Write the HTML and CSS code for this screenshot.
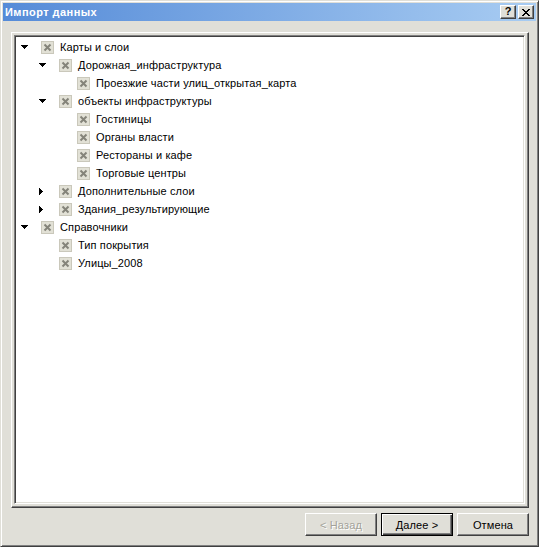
FILE: index.html
```html
<!DOCTYPE html>
<html lang="ru">
<head>
<meta charset="utf-8">
<title>Импорт данных</title>
<link rel="stylesheet" href="styles.css">
</head>
<body>
<div class="window">
  <div class="caption">
    <span class="title">Импорт данных</span>
    <div class="cap-buttons">
      <div class="cap-btn"><span class="q">?</span></div>
      <div class="cap-btn">
        <svg width="8" height="7" viewBox="0 0 8 7" shape-rendering="crispEdges"><path d="M0 0h2v1h1v1h2v-1h1v-1h2v1h-1v1h-1v1h-1v1h1v1h1v1h1v1h-2v-1h-1v-1h-2v1h-1v1h-2v-1h1v-1h1v-1h1v-1h-1v-1h-1v-1h-1z" fill="#000"/></svg>
      </div>
    </div>
  </div>
  <div class="body">
    <div class="panel">
      <div class="tree">
        <div class="row l0"><span class="exp"><svg width="7" height="4" viewBox="0 0 7 4" shape-rendering="crispEdges"><path d="M0 0h7v1h-1v1h-1v1h-1v1h-1v-1h-1v-1h-1v-1h-1z" fill="#000"/></svg></span><span class="cb"><svg width="13" height="13" viewBox="0 0 13 13"><rect x="0.5" y="0.5" width="12" height="12" fill="#e2e1d6" stroke="#cac8bb"/><path d="M3.5 3.5l6 6M9.5 3.5l-6 6" stroke="#85847a" stroke-width="2"/></svg></span><span class="label">Карты и слои</span></div>
        <div class="row l1"><span class="exp"><svg width="7" height="4" viewBox="0 0 7 4" shape-rendering="crispEdges"><path d="M0 0h7v1h-1v1h-1v1h-1v1h-1v-1h-1v-1h-1v-1h-1z" fill="#000"/></svg></span><span class="cb"><svg width="13" height="13" viewBox="0 0 13 13"><rect x="0.5" y="0.5" width="12" height="12" fill="#e2e1d6" stroke="#cac8bb"/><path d="M3.5 3.5l6 6M9.5 3.5l-6 6" stroke="#85847a" stroke-width="2"/></svg></span><span class="label">Дорожная_инфраструктура</span></div>
        <div class="row l2"><span class="exp"></span><span class="cb"><svg width="13" height="13" viewBox="0 0 13 13"><rect x="0.5" y="0.5" width="12" height="12" fill="#e2e1d6" stroke="#cac8bb"/><path d="M3.5 3.5l6 6M9.5 3.5l-6 6" stroke="#85847a" stroke-width="2"/></svg></span><span class="label">Проезжие части улиц_открытая_карта</span></div>
        <div class="row l1"><span class="exp"><svg width="7" height="4" viewBox="0 0 7 4" shape-rendering="crispEdges"><path d="M0 0h7v1h-1v1h-1v1h-1v1h-1v-1h-1v-1h-1v-1h-1z" fill="#000"/></svg></span><span class="cb"><svg width="13" height="13" viewBox="0 0 13 13"><rect x="0.5" y="0.5" width="12" height="12" fill="#e2e1d6" stroke="#cac8bb"/><path d="M3.5 3.5l6 6M9.5 3.5l-6 6" stroke="#85847a" stroke-width="2"/></svg></span><span class="label">объекты инфраструктуры</span></div>
        <div class="row l2"><span class="exp"></span><span class="cb"><svg width="13" height="13" viewBox="0 0 13 13"><rect x="0.5" y="0.5" width="12" height="12" fill="#e2e1d6" stroke="#cac8bb"/><path d="M3.5 3.5l6 6M9.5 3.5l-6 6" stroke="#85847a" stroke-width="2"/></svg></span><span class="label">Гостиницы</span></div>
        <div class="row l2"><span class="exp"></span><span class="cb"><svg width="13" height="13" viewBox="0 0 13 13"><rect x="0.5" y="0.5" width="12" height="12" fill="#e2e1d6" stroke="#cac8bb"/><path d="M3.5 3.5l6 6M9.5 3.5l-6 6" stroke="#85847a" stroke-width="2"/></svg></span><span class="label">Органы власти</span></div>
        <div class="row l2"><span class="exp"></span><span class="cb"><svg width="13" height="13" viewBox="0 0 13 13"><rect x="0.5" y="0.5" width="12" height="12" fill="#e2e1d6" stroke="#cac8bb"/><path d="M3.5 3.5l6 6M9.5 3.5l-6 6" stroke="#85847a" stroke-width="2"/></svg></span><span class="label">Рестораны и кафе</span></div>
        <div class="row l2"><span class="exp"></span><span class="cb"><svg width="13" height="13" viewBox="0 0 13 13"><rect x="0.5" y="0.5" width="12" height="12" fill="#e2e1d6" stroke="#cac8bb"/><path d="M3.5 3.5l6 6M9.5 3.5l-6 6" stroke="#85847a" stroke-width="2"/></svg></span><span class="label">Торговые центры</span></div>
        <div class="row l1"><span class="exp"><svg width="4" height="7" viewBox="0 0 4 7" shape-rendering="crispEdges"><path d="M0 0h1v1h1v1h1v1h1v1h-1v1h-1v1h-1v1h-1z" fill="#000"/></svg></span><span class="cb"><svg width="13" height="13" viewBox="0 0 13 13"><rect x="0.5" y="0.5" width="12" height="12" fill="#e2e1d6" stroke="#cac8bb"/><path d="M3.5 3.5l6 6M9.5 3.5l-6 6" stroke="#85847a" stroke-width="2"/></svg></span><span class="label">Дополнительные слои</span></div>
        <div class="row l1"><span class="exp"><svg width="4" height="7" viewBox="0 0 4 7" shape-rendering="crispEdges"><path d="M0 0h1v1h1v1h1v1h1v1h-1v1h-1v1h-1v1h-1z" fill="#000"/></svg></span><span class="cb"><svg width="13" height="13" viewBox="0 0 13 13"><rect x="0.5" y="0.5" width="12" height="12" fill="#e2e1d6" stroke="#cac8bb"/><path d="M3.5 3.5l6 6M9.5 3.5l-6 6" stroke="#85847a" stroke-width="2"/></svg></span><span class="label">Здания_результирующие</span></div>
        <div class="row l0"><span class="exp"><svg width="7" height="4" viewBox="0 0 7 4" shape-rendering="crispEdges"><path d="M0 0h7v1h-1v1h-1v1h-1v1h-1v-1h-1v-1h-1v-1h-1z" fill="#000"/></svg></span><span class="cb"><svg width="13" height="13" viewBox="0 0 13 13"><rect x="0.5" y="0.5" width="12" height="12" fill="#e2e1d6" stroke="#cac8bb"/><path d="M3.5 3.5l6 6M9.5 3.5l-6 6" stroke="#85847a" stroke-width="2"/></svg></span><span class="label">Справочники</span></div>
        <div class="row l1"><span class="exp"></span><span class="cb"><svg width="13" height="13" viewBox="0 0 13 13"><rect x="0.5" y="0.5" width="12" height="12" fill="#e2e1d6" stroke="#cac8bb"/><path d="M3.5 3.5l6 6M9.5 3.5l-6 6" stroke="#85847a" stroke-width="2"/></svg></span><span class="label">Тип покрытия</span></div>
        <div class="row l1"><span class="exp"></span><span class="cb"><svg width="13" height="13" viewBox="0 0 13 13"><rect x="0.5" y="0.5" width="12" height="12" fill="#e2e1d6" stroke="#cac8bb"/><path d="M3.5 3.5l6 6M9.5 3.5l-6 6" stroke="#85847a" stroke-width="2"/></svg></span><span class="label">Улицы_2008</span></div>
      </div>
    </div>
    <div class="buttons">
      <div class="btn disabled">&lt; Назад</div>
      <div class="btn default">Далее &gt;</div>
      <div class="btn">Отмена</div>
    </div>
  </div>
</div>
</body>
</html>
```
FILE: styles.css
```css
html, body {
  margin: 0;
  padding: 0;
}
body {
  width: 539px;
  height: 547px;
  font-family: "Liberation Sans", Arial, sans-serif;
  font-size: 11px;
  color: #000;
}
.window {
  box-sizing: border-box;
  width: 539px;
  height: 547px;
  background: #e0dfd8;
  border: 1px solid;
  border-color: #e0dfd8 #404040 #404040 #e0dfd8;
  box-shadow: inset 1px 1px #fff, inset -1px -1px #808080;
  padding: 2px;
  display: flex;
  flex-direction: column;
}
.caption {
  height: 18px;
  flex: none;
  background: linear-gradient(90deg, #558bd8, #a8ccf2);
  display: flex;
  align-items: center;
  justify-content: space-between;
  padding: 0 2px 0 2px;
}
.title {
  color: #fff;
  font-weight: bold;
  font-size: 11px;
  letter-spacing: 0.45px;
}
.cap-buttons {
  display: flex;
  gap: 2px;
}
.cap-btn {
  box-sizing: border-box;
  width: 16px;
  height: 14px;
  background: #e0dfd8;
  border: 1px solid;
  border-color: #fff #404040 #404040 #fff;
  box-shadow: inset -1px -1px #808080;
  display: flex;
  align-items: center;
  justify-content: center;
}
.q {
  font-weight: bold;
  font-size: 11px;
  line-height: 11px;
  margin-top: -1px;
}
.body {
  flex: 1;
  display: flex;
  flex-direction: column;
  padding: 11px 7px 8px 8px;
}
.panel {
  box-sizing: border-box;
  width: 518px;
  height: 476px;
  border: 1px solid;
  border-color: #fff #404040 #404040 #fff;
  box-shadow: inset -1px -1px #808080;
  padding: 2px 3px 3px 2px;
  display: flex;
}
.tree {
  flex: 1;
  background: #fff;
  border: 1px solid;
  border-color: #808080 #fff #fff #808080;
  box-shadow: inset 1px 1px #404040, inset -1px -1px #e0dfd8;
  padding: 2px 1px 1px 1px;
}
.row {
  height: 18px;
  display: flex;
  align-items: center;
}
.row.l1 { padding-left: 18px; }
.row.l2 { padding-left: 36px; }
.exp {
  box-sizing: border-box;
  width: 20px;
  padding-left: 5px;
  display: flex;
  align-items: center;
}
.exp svg { display: block; }
.cb {
  margin-left: 5px;
  display: flex;
}
.cb svg { display: block; }
.label {
  margin-left: 6px;
  white-space: nowrap;
  letter-spacing: 0.12px;
}
.buttons {
  display: flex;
  justify-content: flex-end;
  gap: 4px;
  margin-top: 5px;
}
.btn {
  box-sizing: border-box;
  width: 72px;
  height: 23px;
  background: #e0dfd8;
  border: 1px solid;
  border-color: #fff #404040 #404040 #fff;
  box-shadow: inset -1px -1px #808080;
  display: flex;
  align-items: center;
  justify-content: center;
  letter-spacing: 0.12px;
}
.btn.default {
  border-color: #000;
  box-shadow: inset 1px 1px #fff, inset -1px -1px #404040, inset -2px -2px #808080;
}
.btn.disabled {
  color: #a3a29a;
  text-shadow: 1px 1px #fff;
}
```
